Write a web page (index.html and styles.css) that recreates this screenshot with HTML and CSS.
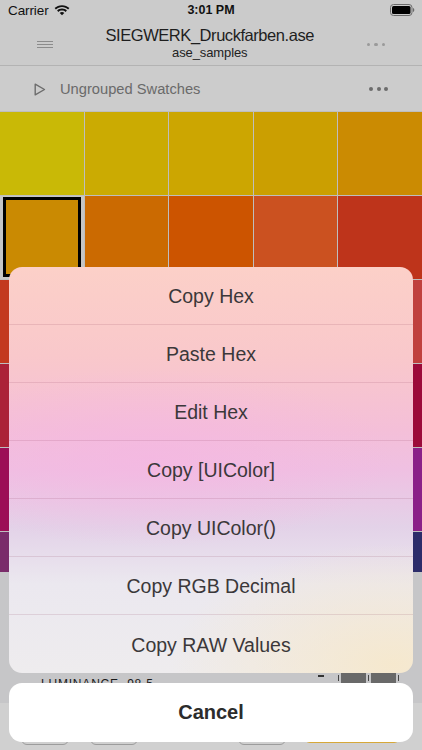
FILE: index.html
```html
<!DOCTYPE html>
<html>
<head>
<meta charset="utf-8">
<link rel="stylesheet" href="styles.css">
</head>
<body>
<div class="app">
  <div class="status">
    <div class="status-left">
      <span class="carrier">Carrier</span>
      <svg class="wifi" width="16" height="12" viewBox="0 0 16 12">
        <path d="M8 1.2C5.1 1.2 2.5 2.3 0.6 4.1L1.9 5.5C3.5 4 5.6 3.1 8 3.1S12.5 4 14.1 5.5L15.4 4.1C13.5 2.3 10.9 1.2 8 1.2Z" fill="#111"/>
        <path d="M8 4.6C6.1 4.6 4.4 5.3 3.1 6.5L4.4 7.9C5.4 7 6.6 6.5 8 6.5S10.6 7 11.6 7.9L12.9 6.5C11.6 5.3 9.9 4.6 8 4.6Z" fill="#111"/>
        <path d="M8 8C7.1 8 6.3 8.3 5.7 8.9L8 11.3L10.3 8.9C9.7 8.3 8.9 8 8 8Z" fill="#111"/>
      </svg>
    </div>
    <span class="time">3:01 PM</span>
    <svg class="battery" width="25" height="12" viewBox="0 0 25 12">
      <rect x="0.5" y="0.5" width="21.5" height="11" rx="3" fill="none" stroke="#6a6a6a" stroke-width="1"/>
      <rect x="2" y="2" width="18.5" height="8" rx="1.5" fill="#000"/>
      <path d="M23 4v4c0.8-0.3 1.3-1.1 1.3-2s-0.5-1.7-1.3-2z" fill="#6a6a6a"/>
    </svg>
  </div>

  <div class="nav">
    <div class="hamburger"><i></i><i></i><i></i></div>
    <div class="nav-title">
      <div class="title">SIEGWERK_Druckfarben.ase</div>
      <div class="subtitle">ase_samples</div>
    </div>
    <div class="nav-dots"><i></i><i></i><i></i></div>
  </div>

  <div class="section">
    <svg class="play" width="12" height="13" viewBox="0 0 12 13">
      <path d="M1.2 1.2L10.5 6.5L1.2 11.8Z" fill="none" stroke="#6c6c6c" stroke-width="1.4" stroke-linejoin="round"/>
    </svg>
    <span class="section-title">Ungrouped Swatches</span>
    <div class="section-dots"><i></i><i></i><i></i></div>
  </div>

  <div class="grid">
    <div class="cell" style="background:#c9b906"></div>
    <div class="cell" style="background:#cbab02"></div>
    <div class="cell" style="background:#cca601"></div>
    <div class="cell" style="background:#cb9f01"></div>
    <div class="cell" style="background:#cb8b02"></div>

    <div class="cell selected"><div class="sel-box" style="background:#ca8a02"></div></div>
    <div class="cell" style="background:#cb6a01"></div>
    <div class="cell" style="background:#cc5400"></div>
    <div class="cell" style="background:#cb5120"></div>
    <div class="cell" style="background:#be341b"></div>

    <div class="cell" style="background:#c3391f"></div>
    <div class="cell" style="background:#c6392a"></div>
    <div class="cell" style="background:#c43c33"></div>
    <div class="cell" style="background:#c23d3a"></div>
    <div class="cell" style="background:#c0403e"></div>

    <div class="cell" style="background:#ab2238"></div>
    <div class="cell" style="background:#a81c3c"></div>
    <div class="cell" style="background:#a4143c"></div>
    <div class="cell" style="background:#a00e3c"></div>
    <div class="cell" style="background:#9c0a3a"></div>

    <div class="cell" style="background:#9c0e56"></div>
    <div class="cell" style="background:#981562"></div>
    <div class="cell" style="background:#941a70"></div>
    <div class="cell" style="background:#8e1e7e"></div>
    <div class="cell" style="background:#8a2088"></div>

    <div class="cell" style="background:#7a2c6a"></div>
    <div class="cell" style="background:#6a2e72"></div>
    <div class="cell" style="background:#532c70"></div>
    <div class="cell" style="background:#3e2c6e"></div>
    <div class="cell" style="background:#2c2c6a"></div>
  </div>

  <div class="details">
    <div class="lum-row">
      <span class="lum">LUMINANCE&nbsp;&nbsp;98.5</span>
      <div class="lum-right">
        <span class="dash"></span>
        <span class="tick"></span>
        <span class="dbox"></span>
        <span class="tick"></span>
        <span class="dbox"></span>
        <span class="tick"></span>
      </div>
    </div>
  </div>

  <div class="toolbar">
    <span class="tbtn"></span>
    <span class="tbtn"></span>
    <span class="tbtn third"></span>
    <span class="tbtn yellow"></span>
  </div>
</div>

<div class="sheet-wrap">
  <div class="sheet">
    <div class="item">Copy Hex</div>
    <div class="item">Paste Hex</div>
    <div class="item">Edit Hex</div>
    <div class="item">Copy [UIColor]</div>
    <div class="item">Copy UIColor()</div>
    <div class="item">Copy RGB Decimal</div>
    <div class="item">Copy RAW Values</div>
  </div>
  <div class="cancel">Cancel</div>
</div>
</body>
</html>
```

FILE: styles.css
```css
* { box-sizing: border-box; }
html, body {
  margin: 0;
  padding: 0;
}
body {
  width: 422px;
  height: 750px;
  overflow: hidden;
  background: #c7c7c9;
  font-family: "Liberation Sans", Arial, sans-serif;
  position: relative;
}
.app {
  display: flex;
  flex-direction: column;
  height: 750px;
}

/* status bar */
.status {
  height: 20px;
  background: #cbcbcb;
  display: flex;
  align-items: center;
  justify-content: space-between;
  padding: 0 7px 0 8px;
  position: relative;
}
.status-left {
  display: flex;
  align-items: center;
  gap: 5px;
}
.carrier {
  font-size: 13.5px;
  color: #111;
  letter-spacing: -0.1px;
}
.wifi { margin-top: -1px; }
.time {
  position: absolute;
  left: 0;
  right: 0;
  text-align: center;
  font-size: 12.5px;
  font-weight: bold;
  color: #111;
  pointer-events: none;
}

/* nav */
.nav {
  height: 46px;
  background: #cbcbcb;
  border-bottom: 1px solid #b3b3b3;
  display: flex;
  align-items: center;
  padding: 0 37px;
}
.hamburger {
  width: 16px;
  display: flex;
  flex-direction: column;
  gap: 2px;
  margin-top: 3px;
}
.hamburger i {
  display: block;
  height: 1px;
  background: #8c8c8c;
}
.nav-title {
  flex: 1;
  text-align: center;
  padding-top: 1px;
}
.title {
  font-size: 16.5px;
  color: #1e1e1e;
  letter-spacing: -0.45px;
  line-height: 20px;
}
.subtitle {
  font-size: 13px;
  color: #222;
  line-height: 16px;
  letter-spacing: -0.1px;
}
.nav-dots {
  display: flex;
  gap: 4px;
  margin-top: 4px;
}
.nav-dots i {
  width: 3.5px;
  height: 3.5px;
  border-radius: 50%;
  background: #9a9a9a;
  display: block;
}

/* section header */
.section {
  height: 45px;
  background: #cccccc;
  display: flex;
  align-items: center;
  padding: 0 34px 0 34px;
}
.play { margin-top: 1px; }
.section-title {
  flex: 1;
  margin-left: 14px;
  font-size: 14.7px;
  color: #6a6a6a;
}
.section-dots {
  display: flex;
  gap: 3.5px;
}
.section-dots i {
  width: 4px;
  height: 4px;
  border-radius: 50%;
  background: #6c6c6c;
  display: block;
}

/* grid */
.grid {
  height: 461px;
  overflow: hidden;
  background: #bebebe;
  padding-top: 1px;
  display: grid;
  grid-template-columns: 84px 83px 84px 83px 84px;
  grid-auto-rows: 83px;
  gap: 1px;
}
.cell.selected {
  background: #c5c5c5;
  padding: 1px 3px 2px 3px;
}
.sel-box {
  height: 100%;
  border: 3px solid #000;
}

/* details */
.details {
  height: 131px;
  background: #c6c6c8;
  padding: 101px 21px 0 41px;
}
.lum-row {
  display: flex;
  align-items: flex-start;
  justify-content: space-between;
}
.lum {
  font-size: 12px;
  color: #1a1a1a;
  letter-spacing: 0.8px;
  margin-top: 4px;
}
.lum-right {
  display: flex;
  align-items: flex-start;
}
.dash {
  width: 6px;
  height: 2px;
  background: #333;
  margin-top: 2px;
  margin-right: 12px;
}
.tick {
  width: 1px;
  height: 6px;
  background: #444;
  margin: 2px 2px 0 2px;
}
.dbox {
  width: 25px;
  height: 14px;
  background: #696969;
}

/* toolbar */
.toolbar {
  height: 47px;
  background: #d0d0d0;
  display: flex;
  align-items: flex-end;
  padding: 0 0 5px 21px;
  gap: 21px;
}
.tbtn {
  width: 48px;
  height: 32px;
  border: 1px solid #9c9c9c;
  border-radius: 6px;
}
.tbtn.third { margin-left: 79px; }
.tbtn.yellow {
  width: 96px;
  height: 30px;
  margin-left: -3px;
  margin-bottom: 2px;
  border: none;
  background: #d6a838;
}

/* action sheet */
.sheet-wrap {
  position: absolute;
  top: 267px;
  left: 9px;
  width: 404px;
  display: flex;
  flex-direction: column;
  gap: 10px;
}
.sheet {
  border-radius: 13px;
  overflow: hidden;
  background:
    radial-gradient(ellipse 55% 30% at 95% 98%, rgba(246, 232, 204, 0.95), rgba(246, 232, 204, 0) 100%),
    radial-gradient(ellipse 60% 22% at 35% 47%, rgba(245, 182, 226, 0.7), rgba(245, 182, 226, 0) 100%),
    linear-gradient(180deg, #fcd0c8 0%, #f9c8cb 22%, #f4bfd8 40%, #efc0e2 50%, #e3d2e8 64%, #ebe8ef 78%, #eeecee 100%);
}
.item {
  height: 58px;
  display: flex;
  align-items: center;
  justify-content: center;
  padding-top: 2px;
  font-size: 19.5px;
  color: #3b383a;
  border-bottom: 1px solid rgba(120, 40, 70, 0.13);
}
.item:last-child { border-bottom: none; }
.cancel {
  height: 59px;
  border-radius: 13px;
  background: #ffffff;
  display: flex;
  align-items: center;
  justify-content: center;
  font-size: 20px;
  font-weight: bold;
  color: #2c2c2c;
}
```
